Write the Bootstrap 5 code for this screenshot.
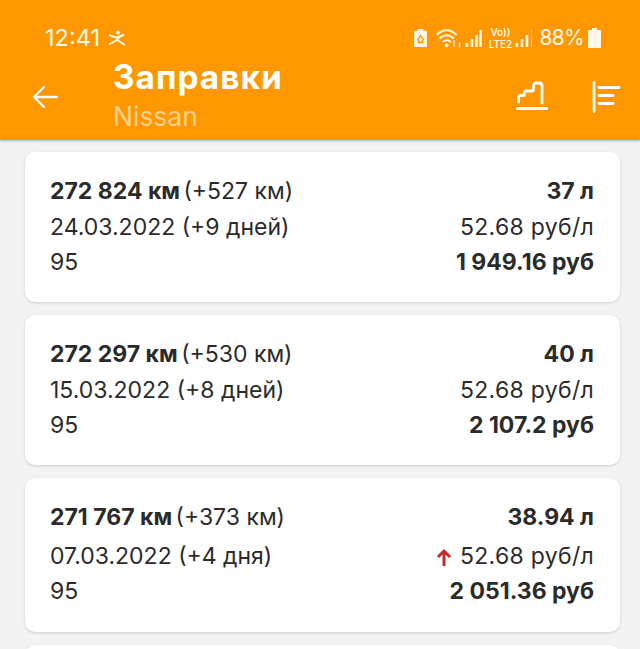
<!DOCTYPE html>
<html lang="ru"><head><meta charset="utf-8">
<link href="https://cdn.jsdelivr.net/npm/bootstrap@5.3.0/dist/css/bootstrap.min.css" rel="stylesheet">
<style>
html,body{height:649px;overflow:hidden;background:#f3f3f3;font-family:"Inter","Liberation Sans",sans-serif;color:#2b2b2b}
.appbar{height:140px;background:#ff9800;color:#fff;box-shadow:0 1px 3px rgba(0,0,0,.25)}
.statusline{height:54px;padding:22px 39px 0 45px;font-size:23.5px;line-height:32px;color:#fff7e8}
.pct{font-size:21px;letter-spacing:-.7px;margin-left:6px}
.netlabel{font-size:10px;line-height:12px;font-weight:600;width:24px}
.toolbar{height:86px;padding:0 19px 0 32px}
.backslot{width:81px}
.heading{margin-top:-4px}
.ttl{font-size:33.4px;font-weight:700;line-height:38px;letter-spacing:1px}
.sub{font-size:26.5px;line-height:32px;color:#ffd18c;margin-top:4px}
.feed{padding:12px 20px 0 25px}
.entry{background:#fff;border-radius:10px;box-shadow:0 1px 3px rgba(0,0,0,.16);height:150px;margin-bottom:13px;padding:22px 26px 0 25px;font-size:23px;line-height:35.5px}
.entry.tall{height:154px}
.tall .midrow{margin-top:3px}
.entry b{font-weight:700}
.lefthead b{margin-right:-3px}
.ratecell{letter-spacing:.3px}
.stub{height:40px;margin:0;padding:0}
</style></head><body>
<header class="appbar">
 <div class="statusline d-flex align-items-center justify-content-between">
  <div class="d-flex align-items-center gap-2"><span>12:41</span>
   <svg width="19" height="17" viewBox="0 0 19 17" fill="none" stroke="#fff7e8" stroke-width="2" stroke-linejoin="round"><circle cx="10" cy="2.500" r="2" fill="#fff7e8" stroke="none"/><path d="M1 5l7 2.500 4-1 4-2"/><path d="M12 6.500L9 10l8 5"/><path d="M9 10L1 14.500"/></svg>
  </div>
  <div class="d-flex align-items-center">
   <svg width="15" height="20" viewBox="0 0 16 22" style="margin-right:8px"><path fill="#fff7e8" d="M5 1h6v2h3a1 1 0 0 1 1 1v16a1 1 0 0 1-1 1H2a1 1 0 0 1-1-1V4a1 1 0 0 1 1-1h3z"/><path fill="none" stroke="#ff9800" stroke-width="1.500" d="M8 8l-3 5 2 3M8 8l3 5-2 3M5 16h6"/></svg>
   <svg width="25" height="22" viewBox="0 0 26 24" fill="none" stroke="#fff7e8" stroke-width="2.200" stroke-linecap="round" style="margin-right:4px"><path d="M1 8c6-6 14-6 20 0M4 12c4-4 10-4 14 0M7 16c2.500-2 5.500-2 8 0"/><circle cx="11" cy="20" r="1" fill="#fff7e8"/><path d="M19 15v6M25 17v5" stroke-width="1.500"/></svg>
   <svg width="17" height="22" viewBox="0 0 17 22" stroke="#fff7e8" stroke-width="2.600" style="margin-right:6px"><path d="M2 20v-4M7 20v-8M11.500 20v-12M15.500 20v-17"/></svg>
   <span class="netlabel d-flex flex-column text-center"><span>Vo))</span><span>LTE2</span></span>
   <svg width="18" height="22" viewBox="0 0 18 22" stroke="#fff7e8" stroke-width="2.600" style="margin-left:3px"><path d="M2 20v-4M7 20v-8M12 20v-12"/><path d="M16.500 20v-17" stroke-width="1" opacity=".6"/></svg>
   <span class="pct">88%</span>
   <svg width="13" height="20" viewBox="0 0 13 20" class="ms-1"><path fill="#fff7e8" d="M4 0h5v2h3a1 1 0 0 1 1 1v16a1 1 0 0 1-1 1H1a1 1 0 0 1-1-1V3a1 1 0 0 1 1-1h3z"/></svg>
  </div>
 </div>
 <div class="toolbar d-flex align-items-center">
  <div class="backslot"><svg width="26" height="26" viewBox="0 0 26 26" fill="none" stroke="#fff" stroke-width="2.400" stroke-linecap="round" stroke-linejoin="round"><path d="M25 13H2M12 3L2 13l10 10"/></svg></div>
  <div class="flex-grow-1 heading"><div class="ttl">Заправки</div><div class="sub">Nissan</div></div>
  <svg width="32" height="32" viewBox="0 0 32 32" fill="none" stroke="#fff" stroke-width="2.800" stroke-linecap="round" stroke-linejoin="round" style="margin-right:44px"><path d="M2.500 21v-4q0-2.500 2.500-2.500h2q1.500 0 1.500-1.500v-1.500q0-1.500 1.500-1.500h6q1.500 0 1.500-1.500V5q0-3 3-3h2.500q3 0 3 3v17"/><path d="M1 27.500h30"/></svg>
  <svg width="29" height="32" viewBox="0 0 29 32" fill="none" stroke="#fff" stroke-width="2.800" stroke-linecap="round"><path d="M2 1.500v29M7 6.500h20M7 14.500h14M7 22.500h14"/></svg>
 </div>
</header>
<main class="feed">
 <article class="entry d-flex justify-content-between">
  <div class="lefthead"><div><b>272 824 км</b> (+527 км)</div><div>24.03.2022 (+9 дней)</div><div>95</div></div>
  <div class="text-end"><div><b>37 л</b></div><div class="ratecell">52.68 руб/л</div><div><b>1 949.16 руб</b></div></div>
 </article>
 <article class="entry d-flex justify-content-between">
  <div class="lefthead"><div><b>272 297 км</b> (+530 км)</div><div>15.03.2022 (+8 дней)</div><div>95</div></div>
  <div class="text-end"><div><b>40 л</b></div><div class="ratecell">52.68 руб/л</div><div><b>2 107.2 руб</b></div></div>
 </article>
 <article class="entry tall d-flex justify-content-between">
  <div class="lefthead"><div><b>271 767 км</b> (+373 км)</div><div class="midrow">07.03.2022 (+4 дня)</div><div>95</div></div>
  <div class="text-end"><div><b>38.94 л</b></div><div class="midrow ratecell"><svg width="16" height="18" viewBox="0 0 16 18" fill="none" stroke="#c62828" stroke-width="3" class="me-2"><path d="M8 18V3M2 9l6-6 6 6"/></svg>52.68 руб/л</div><div><b>2 051.36 руб</b></div></div>
 </article>
 <div class="entry stub"></div>
</main>
</body></html>
